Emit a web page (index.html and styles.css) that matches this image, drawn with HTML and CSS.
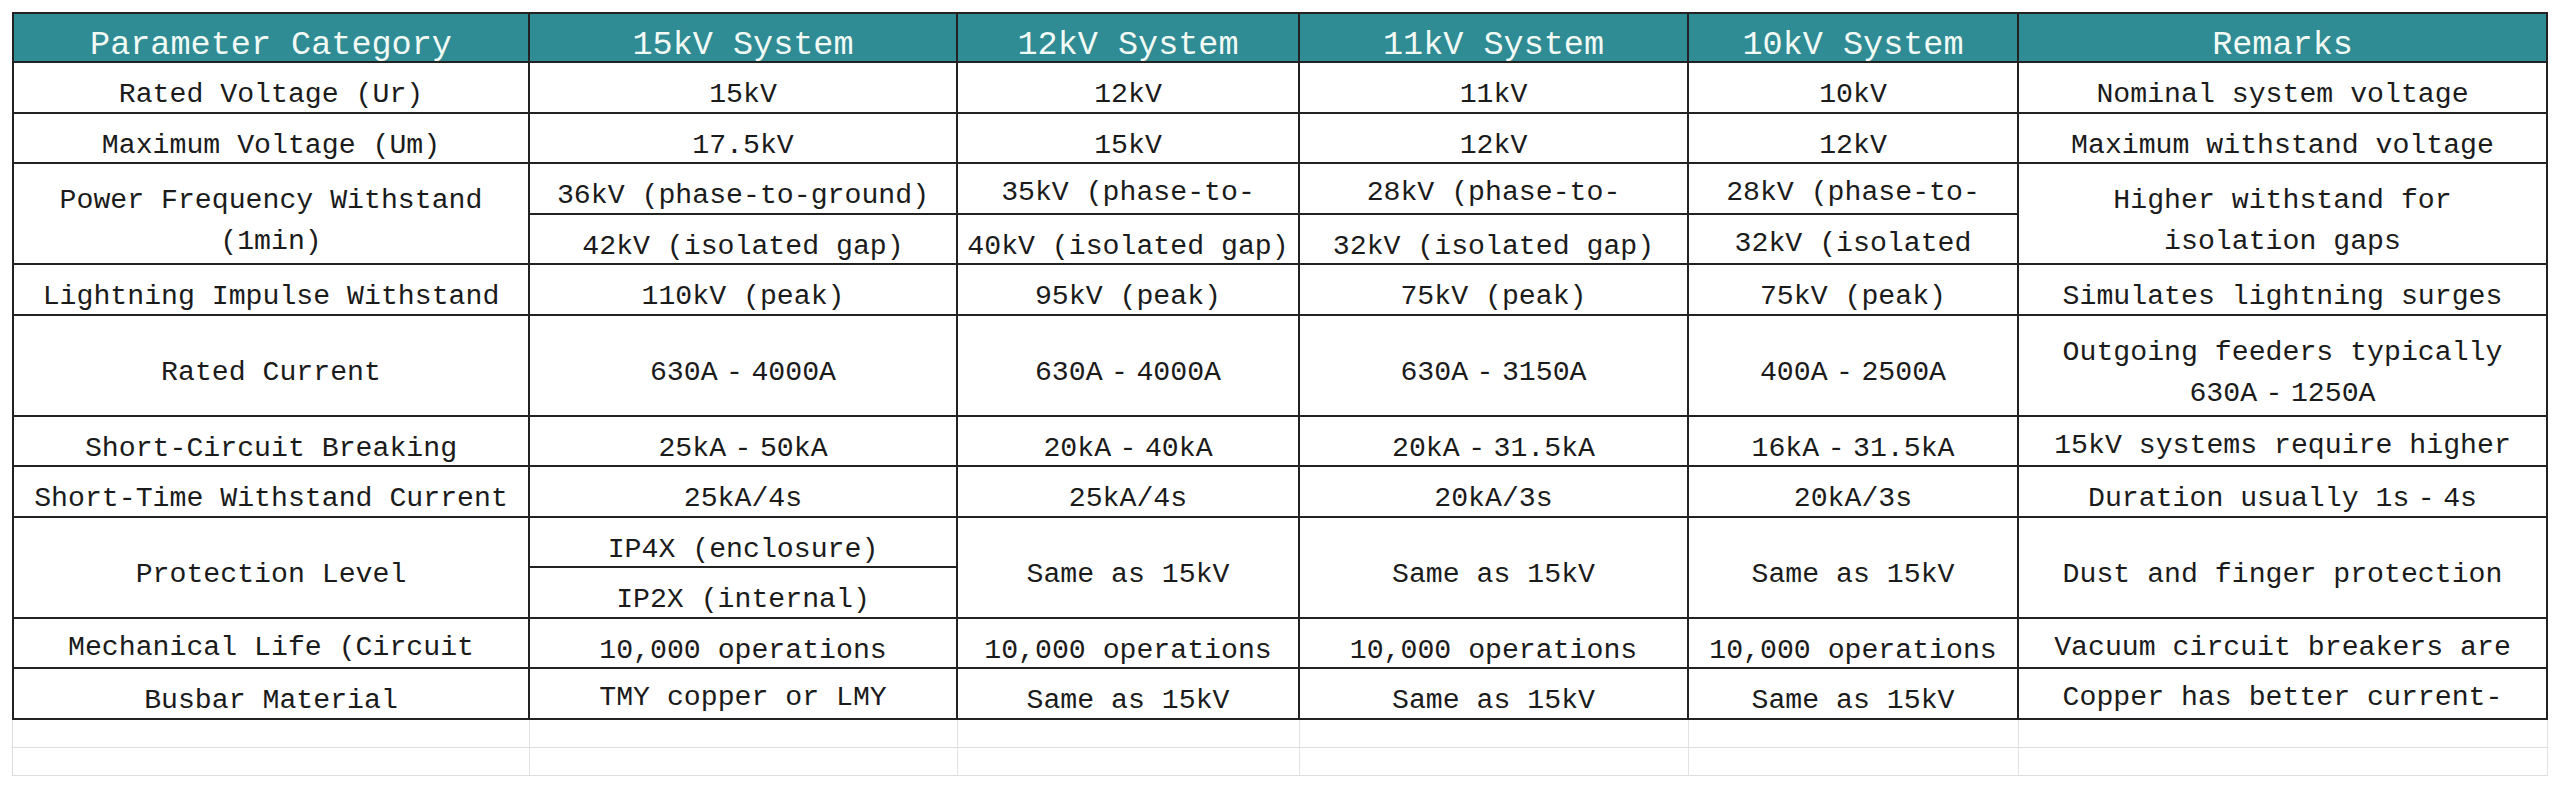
FILE: index.html
```html
<!DOCTYPE html>
<html lang="en">
<head>
<meta charset="utf-8">
<title>Switchgear Parameters</title>
<link rel="stylesheet" href="styles.css">
</head>
<body>
<div class="sheet">
  <div class="grid">
    <div class="c hd">Parameter Category</div>
    <div class="c hd">15kV System</div>
    <div class="c hd">12kV System</div>
    <div class="c hd">11kV System</div>
    <div class="c hd">10kV System</div>
    <div class="c hd">Remarks</div>

    <div class="c">Rated Voltage (Ur)</div>
    <div class="c">15kV</div>
    <div class="c">12kV</div>
    <div class="c">11kV</div>
    <div class="c">10kV</div>
    <div class="c">Nominal system voltage</div>

    <div class="c">Maximum Voltage (Um)</div>
    <div class="c">17.5kV</div>
    <div class="c">15kV</div>
    <div class="c">12kV</div>
    <div class="c">12kV</div>
    <div class="c">Maximum withstand voltage</div>

    <div class="c r2"><span class="t">Power Frequency Withstand<br>(1min)</span></div>
    <div class="c">36kV (phase-to-ground)</div>
    <div class="c cut">35kV (phase-to-</div>
    <div class="c cut">28kV (phase-to-</div>
    <div class="c cut">28kV (phase-to-</div>
    <div class="c r2"><span class="t">Higher withstand for<br>isolation gaps</span></div>
    <div class="c">42kV (isolated gap)</div>
    <div class="c">40kV (isolated gap)</div>
    <div class="c">32kV (isolated gap)</div>
    <div class="c cut">32kV (isolated</div>

    <div class="c">Lightning Impulse Withstand</div>
    <div class="c">110kV (peak)</div>
    <div class="c">95kV (peak)</div>
    <div class="c">75kV (peak)</div>
    <div class="c">75kV (peak)</div>
    <div class="c">Simulates lightning surges</div>

    <div class="c">Rated Current</div>
    <div class="c"><span class="t">630A<span class="dash">-</span>4000A</span></div>
    <div class="c"><span class="t">630A<span class="dash">-</span>4000A</span></div>
    <div class="c"><span class="t">630A<span class="dash">-</span>3150A</span></div>
    <div class="c"><span class="t">400A<span class="dash">-</span>2500A</span></div>
    <div class="c"><span class="t">Outgoing feeders typically<br>630A<span class="dash">-</span>1250A</span></div>

    <div class="c">Short-Circuit Breaking</div>
    <div class="c"><span class="t">25kA<span class="dash">-</span>50kA</span></div>
    <div class="c"><span class="t">20kA<span class="dash">-</span>40kA</span></div>
    <div class="c"><span class="t">20kA<span class="dash">-</span>31.5kA</span></div>
    <div class="c"><span class="t">16kA<span class="dash">-</span>31.5kA</span></div>
    <div class="c cut">15kV systems require higher</div>

    <div class="c">Short-Time Withstand Current</div>
    <div class="c">25kA/4s</div>
    <div class="c">25kA/4s</div>
    <div class="c">20kA/3s</div>
    <div class="c">20kA/3s</div>
    <div class="c"><span class="t">Duration usually 1s<span class="dash">-</span>4s</span></div>

    <div class="c r2">Protection Level</div>
    <div class="c">IP4X (enclosure)</div>
    <div class="c r2">Same as 15kV</div>
    <div class="c r2">Same as 15kV</div>
    <div class="c r2">Same as 15kV</div>
    <div class="c r2">Dust and finger protection</div>
    <div class="c">IP2X (internal)</div>

    <div class="c cut">Mechanical Life (Circuit</div>
    <div class="c">10,000 operations</div>
    <div class="c">10,000 operations</div>
    <div class="c">10,000 operations</div>
    <div class="c">10,000 operations</div>
    <div class="c cut">Vacuum circuit breakers are</div>

    <div class="c">Busbar Material</div>
    <div class="c cut">TMY copper or LMY</div>
    <div class="c">Same as 15kV</div>
    <div class="c">Same as 15kV</div>
    <div class="c">Same as 15kV</div>
    <div class="c cut">Copper has better current-</div>
  </div>
  <div class="blank">
    <div class="b"></div><div class="b"></div><div class="b"></div><div class="b"></div><div class="b"></div><div class="b"></div>
    <div class="b"></div><div class="b"></div><div class="b"></div><div class="b"></div><div class="b"></div><div class="b"></div>
  </div>
</div>
</body>
</html>
```
FILE: styles.css
```css
html, body {
  margin: 0;
  padding: 0;
  background: #ffffff;
}

body {
  font-family: "Liberation Mono", "DejaVu Sans Mono", monospace;
  color: #1b1b1b;
}

.sheet {
  padding: 12px 0 0 12px;
}

.grid {
  display: grid;
  grid-template-columns: 516px 428px 342px 389px 330px 529px;
  grid-template-rows: 49px 51px 50px 51px 50px 51px 101px 50px 51px 50px 51px 50px 51px;
  width: max-content;
  border-left: 2px solid #222222;
  border-top: 2px solid #222222;
}

.c {
  box-sizing: border-box;
  border-right: 2px solid #222222;
  border-bottom: 2px solid #222222;
  display: flex;
  align-items: center;
  justify-content: center;
  text-align: center;
  padding-top: 14px;
  font-size: 28.2px;
  line-height: 41px;
  white-space: nowrap;
  overflow: hidden;
}

.t {
  display: block;
  text-align: center;
}

.c.cut {
  padding-top: 8px;
}

.hd {
  background: #2f8b94;
  color: #f2faf5;
  font-size: 33.5px;
  line-height: 38px;
  padding-top: 14px;
}

.r2 {
  grid-row: span 2;
}

.dash {
  display: inline-block;
  width: 1.2em;
  text-align: center;
}

.blank {
  display: grid;
  grid-template-columns: 517px 428px 342px 389px 330px 529px;
  grid-template-rows: 28px 28px;
  width: max-content;
  border-left: 1px solid #dddddd;
}

.b {
  box-sizing: border-box;
  border-right: 1px solid #e2e2e2;
  border-bottom: 1px solid #dddddd;
}
```
